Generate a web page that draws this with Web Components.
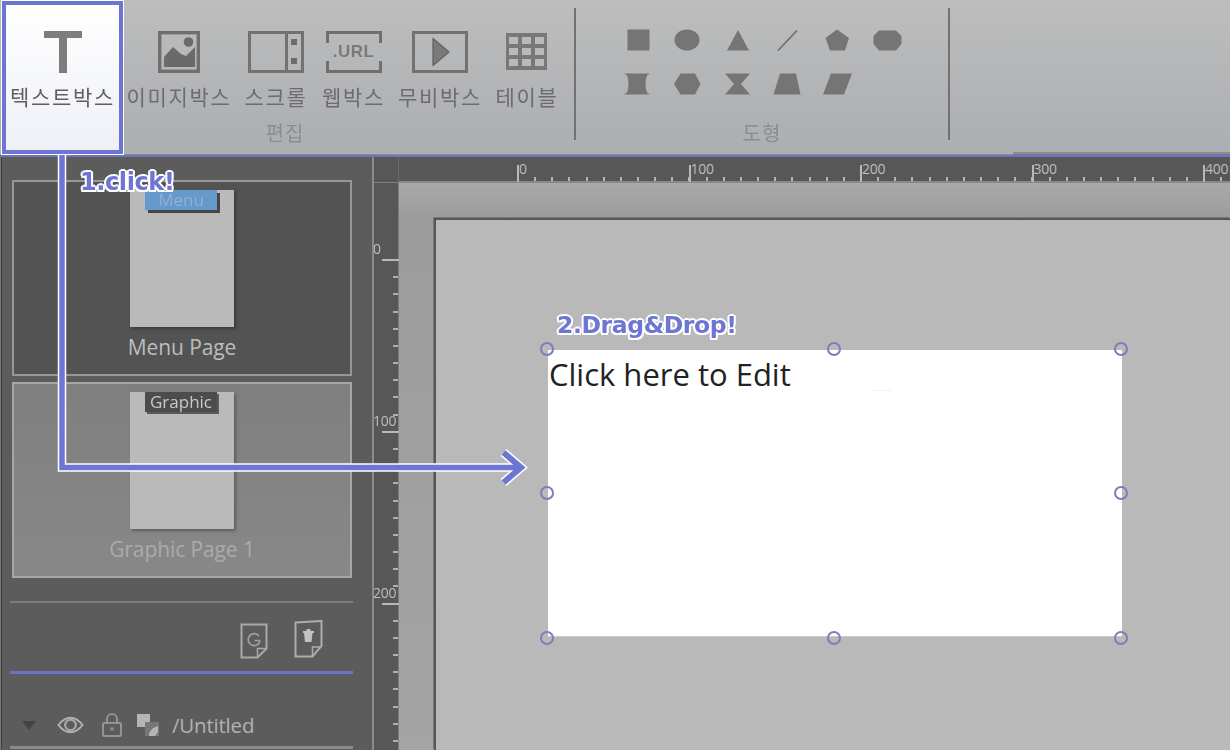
<!DOCTYPE html>
<html lang="ko"><head><meta charset="utf-8"><title>Editor</title>
<style>
html,body{margin:0;padding:0;width:1230px;height:750px;overflow:hidden;background:#5b5b5b}
body{font-family:"Open Sans","Noto Sans CJK KR",sans-serif}
</style></head>
<body>
<app-shell>
  <ribbon-bar slot="ribbon">
    <ribbon-tool selected label="텍스트박스" w="121">
      <svg width="40" height="42" viewBox="0 0 40 42"><path d="M1 0h38v7H24v35h-8V7H1z" fill="#7d7d7d"/></svg>
    </ribbon-tool>
    <ribbon-tool label="이미지박스" w="104" gap="14" ml="3">
      <svg width="42" height="42" viewBox="0 0 42 42"><rect x="1.700" y="1.700" width="38.600" height="38.600" fill="none" stroke="#6f6f6f" stroke-width="3.400"/><path d="M6 36V26l9-10 8 7 5 2 9-9v20z" fill="#6a6a6a"/><circle cx="30.500" cy="11" r="4.800" fill="#6a6a6a"/></svg>
    </ribbon-tool>
    <ribbon-tool label="스크롤" w="62" gap="14">
      <svg width="56" height="42" viewBox="0 0 56 42"><rect x="1.500" y="1.500" width="53" height="39" fill="none" stroke="#727272" stroke-width="3"/><path d="M38.500 2v38" stroke="#727272" stroke-width="3"/><rect x="43" y="8" width="6" height="6" fill="#6c6c6c"/><rect x="43" y="27" width="6" height="6" fill="#6c6c6c"/></svg>
    </ribbon-tool>
    <ribbon-tool label="웹박스" w="63" gap="15">
      <url-icon></url-icon>
    </ribbon-tool>
    <ribbon-tool label="무비박스" w="84" gap="13">
      <svg width="56" height="42" viewBox="0 0 56 42"><rect x="1.500" y="1.500" width="53" height="39" fill="none" stroke="#727272" stroke-width="3"/><path d="M21 7.500L37 21 21 34.500z" fill="#7a7a7a" stroke="#666" stroke-width="1.400" stroke-linejoin="round"/></svg>
    </ribbon-tool>
    <ribbon-tool label="테이블" w="62" gap="14">
      <svg width="42" height="40" viewBox="0 0 42 40"><rect x="0" y="1" width="41" height="37" fill="#787878"/><g fill="#b9babb"><rect x="3" y="5" width="9" height="7"/><rect x="16" y="5" width="9" height="7"/><rect x="29" y="5" width="9" height="7"/><rect x="3" y="16" width="9" height="7"/><rect x="16" y="16" width="9" height="7"/><rect x="29" y="16" width="9" height="7"/><rect x="3" y="27" width="9" height="7"/><rect x="16" y="27" width="9" height="7"/><rect x="29" y="27" width="9" height="7"/></g></svg>
    </ribbon-tool>
    <span slot="edit-label">편집</span>
    <shape-palette slot="shapes"></shape-palette>
    <span slot="shape-label">도형</span>
  </ribbon-bar>
  <page-panel slot="panel">
    <page-thumb tag="Menu" label="Menu Page" kind="menu"></page-thumb>
    <page-thumb tag="Graphic" label="Graphic Page 1" kind="graphic"></page-thumb>
  </page-panel>
  <h-ruler slot="hruler"></h-ruler>
  <v-ruler slot="vruler"></v-ruler>
  <work-canvas slot="canvas"><text-box-item>Click here to Edit</text-box-item></work-canvas>
  <guide-overlay slot="overlay"></guide-overlay>
</app-shell>

<template id="t-shell">
<style>
:host{display:block;width:1230px;height:750px;position:relative;overflow:hidden;background:#5b5b5b}
.app{display:grid;grid-template-rows:157px 1fr;grid-template-columns:372px 27px 1fr;width:1230px;height:750px;filter:blur(.5px)}
.top{grid-column:1/4}
.panel{grid-row:2/4;grid-column:1}
.inner{grid-column:2/4;display:grid;grid-template-columns:27px 1fr;grid-template-rows:26px 1fr;min-height:0}
.corner{background:#575757;border-left:2px solid #8b8b8b;border-bottom:1px solid #7f7f7f;box-sizing:border-box;border-right:1px solid #6a6a6a}
</style>
<div class="app">
  <div class="top"><slot name="ribbon"></slot></div>
  <div class="panel"><slot name="panel"></slot></div>
  <div class="inner">
    <div class="corner"></div>
    <slot name="hruler"></slot>
    <slot name="vruler"></slot>
    <slot name="canvas"></slot>
  </div>
</div>
<slot name="overlay"></slot>
</template>

<template id="t-ribbon">
<style>
:host{display:block;height:157px;box-sizing:border-box;position:relative;background:linear-gradient(#bdbdbd,#acafb3 92%);border-bottom:2px solid #6e74b8;font-family:"Noto Sans CJK KR","Noto Sans",sans-serif}
.bar{display:flex;height:155px;box-shadow:inset 0 -1px 0 #8d8d8d}
.edit{width:574px;display:flex;flex-direction:column;position:relative;flex:none}
.tools{display:flex;align-items:flex-start;height:122px}
.cap{font-size:20px;line-height:24px;color:#8c8c8c;text-align:center;letter-spacing:1px;margin-top:-1px}
.edit .cap{padding-right:4px}
.sep{width:2px;height:132px;background:#727272;margin-top:8px;flex:none}
.shapes{width:372px;flex:none;display:flex;flex-direction:column}
.shapes .wrap{height:122px;padding:18px 0 0 37px;box-sizing:border-box}
.tab{position:absolute;right:0;bottom:0;width:217px;height:1px;background:#6e74b8;border-top:2px solid #8d8d8d}
</style>
<div class="bar">
  <div class="edit"><div class="tools"><slot></slot></div><div class="cap"><slot name="edit-label"></slot></div></div>
  <div class="sep"></div>
  <div class="shapes"><div class="wrap"><slot name="shapes"></slot></div><div class="cap"><slot name="shape-label"></slot></div></div>
  <div class="sep"></div>
</div>
<div class="tab"></div>
</template>

<template id="t-tool">
<style>
:host{display:block;flex:none;box-sizing:border-box}
.t{display:flex;flex-direction:column;align-items:center;box-sizing:border-box;padding-top:31px}
.ic{height:42px;display:flex;align-items:center;justify-content:center}
.lb{font-size:21px;line-height:26px;color:#6c6c6c;white-space:nowrap;margin-top:10px;letter-spacing:1.700px}
:host([selected]) .t{width:121px;height:153px;margin:1px 0 1px 2px;border:4px solid #6c76d2;box-shadow:0 0 0 1px #fff;background:linear-gradient(#fff,#eef0f6);padding-top:26px}
:host([selected]) .lb{color:#5f5f5f}
</style>
<div class="t"><div class="ic"><slot></slot></div><div class="lb"></div></div>
</template>

<template id="t-url">
<style>
:host{display:block;width:56px;height:42px;position:relative;font-family:"Liberation Sans",sans-serif}
svg{display:block}
span{position:absolute;left:0;right:0;top:11px;text-align:center;font-size:17px;line-height:20px;font-weight:700;color:#7a7a7a;letter-spacing:.5px}
</style>
<svg width="56" height="42" viewBox="0 0 56 42"><path d="M1.500 12V1.500h53V12M1.500 30v10.500h53V30" fill="none" stroke="#6f6f6f" stroke-width="3"/></svg>
<span>.URL</span>
</template>

<template id="t-shapes">
<style>
:host{display:grid;grid-template-columns:repeat(6,50px);grid-auto-rows:44px;width:300px}
svg{display:block;margin:auto}
div{display:flex}
</style>
<div><svg width="30" height="24" viewBox="0 0 30 24" fill="#757575"><rect x="4.500" y="1.500" width="22" height="21"/></svg></div>
<div><svg width="30" height="24" viewBox="0 0 30 24" fill="#757575"><ellipse cx="14" cy="12" rx="12.500" ry="10.500"/></svg></div>
<div><svg width="30" height="24" viewBox="0 0 30 24" fill="#757575"><path d="M15 2L26 22.500H4z"/></svg></div>
<div><svg width="30" height="24" viewBox="0 0 30 24"><path d="M5 22.500L24 2.500" stroke="#6f6f6f" stroke-width="1.800" fill="none"/></svg></div>
<div><svg width="30" height="24" viewBox="0 0 30 24" fill="#757575"><path d="M14 1.500l12 8.500-4 12.500H7L2.500 10z"/></svg></div>
<div><svg width="30" height="24" viewBox="0 0 30 24" fill="#757575"><path d="M6 2.500h17l5.500 5.500v8l-5.500 6.500H6L.5 16V8z"/></svg></div>
<div><svg width="30" height="24" viewBox="0 0 30 24" fill="#757575"><path d="M1 1.500h26l-3 2c-2 5-2 12 0 17l3 2H1l3-2c2-5 2-12 0-17z"/></svg></div>
<div><svg width="30" height="24" viewBox="0 0 30 24" fill="#757575"><path d="M7.500 1.500H22l5.500 10.500L22 22.500H7.500L1 12z"/></svg></div>
<div><svg width="30" height="24" viewBox="0 0 30 24" fill="#757575"><path d="M2 1.500h25L18 12l9 10.500H2L11 12z"/></svg></div>
<div><svg width="30" height="24" viewBox="0 0 30 24" fill="#757575"><path d="M7 1.500h16l4.500 21h-27z"/></svg></div>
<div><svg width="30" height="24" viewBox="0 0 30 24" fill="#757575"><path d="M8 1.500h21l-8 21H0z"/></svg></div>
</template>

<template id="t-panel">
<style>
:host{display:flex;flex-direction:column;height:593px;box-sizing:border-box;background:#5c5c5c;border-left:1px solid #777;box-shadow:inset 1px 0 0 #3f3f3f;padding:23px 0 0 11px;color:#b0b0b0;overflow:hidden}
.cards{display:flex;flex-direction:column;gap:6px;width:340px}
.hr{height:2px;width:343px;margin:23px 0 0 -2px;background:#7c7c7c}
.acts{display:flex;justify-content:flex-end;align-items:flex-start;gap:26px;height:68px;box-sizing:border-box;padding:17px 29px 0 0;width:341px;margin-left:-1px}
.blue{height:3px;width:343px;margin-left:-2px;background:#6a72c6}
.row{display:flex;align-items:center;height:46px;margin-top:28px;margin-left:10px;font-size:20.500px;color:#b3b3b3}
.row svg{display:block;flex:none}
.name{margin-left:12px;font-family:"Open Sans",sans-serif;letter-spacing:-.2px}
.foot{height:3px;width:343px;margin-left:-2px;margin-top:-2px;background:#8b8b8b}
</style>
<div class="cards"><slot></slot></div>
<div class="hr"></div>
<div class="acts">
  <svg width="28" height="36" viewBox="0 0 28 36" style="margin-top:3px"><path d="M1.500 1.500h25v24l-9 9h-16z" fill="none" stroke="#a9a9a9" stroke-width="2"/><path d="M26 25.500h-8.500v8.500" fill="none" stroke="#a9a9a9" stroke-width="1.500"/><path d="M19 13a6 6 0 1 0 .5 6.500v-2h-5" fill="none" stroke="#a0a0a0" stroke-width="1.600"/></svg>
  <svg width="29" height="38" viewBox="0 0 29 38"><path d="M1.500 2.500l26-1.500v25l-9 10.500h-17z" fill="none" stroke="#adadad" stroke-width="2"/><path d="M27 27h-8.500v9" fill="none" stroke="#adadad" stroke-width="1.500"/><path d="M9 11h11v2h-1.500l-1 9h-6.500l-1-9H9zM12 11l1-2h3l1 2z" fill="#c2c2c2"/></svg>
</div>
<div class="blue"></div>
<div class="row">
  <svg width="14" height="9" viewBox="0 0 14 9" style="margin-right:21px"><path d="M0 0h14L7 9z" fill="#444"/></svg>
  <svg width="27" height="18" viewBox="0 0 28 18" style="margin-right:17px"><path d="M1.500 9C6 3 10 1.500 14 1.500S22 3 26.500 9C22 15 18 16.500 14 16.500S6 15 1.500 9z" fill="none" stroke="#b2b2b2" stroke-width="2"/><circle cx="14" cy="9" r="5.500" fill="none" stroke="#aaa" stroke-width="2.200"/></svg>
  <svg width="22" height="24" viewBox="0 0 22 24" style="margin-right:13px"><rect x="2" y="10" width="18" height="13" rx="1" fill="none" stroke="#939393" stroke-width="2"/><path d="M6 10V6a5 5 0 0 1 10 0v4" fill="none" stroke="#939393" stroke-width="2"/><rect x="9.500" y="14.500" width="3" height="3" fill="#939393"/></svg>
  <svg width="24" height="24" viewBox="0 0 24 24"><rect x="1" y="1" width="13" height="13" fill="#b5b5b5"/><rect x="9" y="9" width="14" height="14" fill="#777"/><path d="M13 20l4-5 5-2v6l-3 4h-6z" fill="#b5b5b5"/></svg>
  <span class="name">/Untitled</span>
</div>
<div class="foot"></div>
</template>

<template id="t-thumb">
<style>
:host{display:flex;flex-direction:column;align-items:center;height:196px;box-sizing:border-box;border:2px solid #979797;background:#535353;font-size:21px;color:#bdbdbd}
:host([kind="graphic"]){background:linear-gradient(#7f7f7f,#888);border-color:#a6a6a6;color:#ababab}
.pg{width:104px;height:137px;margin-top:8px;background:#bababa;box-shadow:2px 2px 3px #3c3c3c;position:relative;flex:none}
:host([kind="graphic"]) .pg{box-shadow:2px 2px 3px #5e5e5e}
.tag{position:absolute;left:15px;top:0;width:72px;height:20px;background:#6598cb;box-shadow:3px 3px 0 #474747;text-align:center;font-size:17px;line-height:20px;color:#8eb0d2}
:host([kind="graphic"]) .tag{background:#4c4c4c;box-shadow:2px 2px 0 #5a5a5a;color:#c9c9c9}
.lb{margin-top:7px;line-height:27px;white-space:nowrap;letter-spacing:-.1px}
</style>
<div class="pg"><div class="tag"></div></div><div class="lb"></div>
</template>

<template id="t-hruler">
<style>
:host{display:block;height:26px;position:relative;background:#575757;overflow:hidden;font-family:"Open Sans",sans-serif}
.minor{position:absolute;left:118px;right:0;bottom:1px;height:5px;background:repeating-linear-gradient(90deg,#b5b5b5 0 2px,transparent 2px 17.150px)}
.base{position:absolute;left:0;right:0;bottom:0;height:2px;background:#8a8a8a}
.m{position:absolute;top:8px;bottom:1px;width:2px;background:#b9b9b9}
.l{position:absolute;top:3px;font-size:14px;line-height:18px;color:#bdbdbd;letter-spacing:-.3px}
</style>
<div class="minor"></div><div class="base"></div>
</template>

<template id="t-vruler">
<style>
:host{display:block;position:relative;background:#575757;border-left:2px solid #8b8b8b;box-sizing:border-box;overflow:hidden;font-family:"Open Sans",sans-serif}
.minor{position:absolute;right:0;top:76px;bottom:0;width:6px;background:repeating-linear-gradient(#b0b0b0 0 2px,transparent 2px 17.180px)}
.edge{position:absolute;right:0;top:0;bottom:0;width:1px;background:#7d7d7d}
.m{position:absolute;right:0;height:2px;width:17px;background:#b9b9b9}
.l{position:absolute;left:-1px;font-size:14px;line-height:18px;color:#bdbdbd;letter-spacing:-.3px}
</style>
<div class="minor"></div><div class="edge"></div>
</template>

<template id="t-canvas">
<style>
:host{display:block;background:linear-gradient(#a9a9a9,#9c9c9c 36px,#a4a4a4);padding:35px 0 0 35px;box-sizing:border-box;height:567px;overflow:hidden}
.page{height:100%;background:#b9b9b9;border-top:2px solid #565656;border-left:2px solid #565656;box-shadow:-1px -1px 0 #777;padding:130px 0 0 112px;box-sizing:border-box}
</style>
<div class="page"><slot></slot></div>
</template>

<template id="t-box">
<style>
:host{display:block;width:574px;height:286px;background:#fff;position:relative;box-shadow:0 1px 0 #c9c9c9;font-family:"Open Sans",sans-serif}
.txt{font-size:31px;line-height:48px;color:#222;padding-left:1px;white-space:nowrap}
i{position:absolute;width:14px;height:14px;box-sizing:border-box;border:2px solid #7a7fb8;border-radius:50%;margin:-7px 0 0 -7px}
.mark{position:absolute;left:324px;top:40px;width:20px;height:1px;background:#f2f2f2}
</style>
<div class="txt"><slot></slot></div>
<div class="mark"></div>
<i style="left:-1px;top:-1px"></i><i style="left:286px;top:-1px"></i><i style="left:573px;top:-1px"></i>
<i style="left:-1px;top:143px"></i><i style="left:573px;top:143px"></i>
<i style="left:-1px;top:288px"></i><i style="left:286px;top:288px"></i><i style="left:573px;top:288px"></i>
</template>

<template id="t-overlay">
<style>
:host{display:block;position:absolute;inset:0;pointer-events:none;filter:blur(.35px)}
svg{position:absolute;left:0;top:0}
b{position:absolute;font-family:"DejaVu Sans",sans-serif;font-weight:700;color:#6d76d3;white-space:nowrap;letter-spacing:-.4px;
text-shadow:2px 0 #fff,-2px 0 #fff,0 2px #fff,0 -2px #fff,1.500px 1.500px #fff,-1.500px 1.500px #fff,1.500px -1.500px #fff,-1.500px -1.500px #fff}
.a{left:80px;top:166px;font-size:24px;line-height:32px}
.b{left:557px;top:309px;font-size:23.500px;line-height:32px}
</style>
<svg width="1230" height="750" viewBox="0 0 1230 750" fill="none">
  <path d="M62 155V467.500H518" stroke="#fff" stroke-width="8.500"/>
  <path d="M503.500 452.500L521 467.500 503.500 482.500" stroke="#fff" stroke-width="9"/>
  <path d="M62 155V467.500H518" stroke="#6d76d3" stroke-width="5.500"/>
  <path d="M503.500 452.500L521 467.500 503.500 482.500" stroke="#6d76d3" stroke-width="6"/>
</svg>
<b class="a">1.click!</b>
<b class="b">2.Drag&amp;Drop!</b>
</template>

<script>
function tpl(id){return document.getElementById(id).content.cloneNode(true)}
function simple(name,id,init){
  customElements.define(name,class extends HTMLElement{
    constructor(){super();this.attachShadow({mode:"open"}).appendChild(tpl(id))}
    connectedCallback(){if(init)init.call(this,this.shadowRoot)}
  });
}
simple("app-shell","t-shell");
simple("ribbon-bar","t-ribbon");
simple("url-icon","t-url");
simple("shape-palette","t-shapes");
simple("page-panel","t-panel");
simple("work-canvas","t-canvas");
simple("text-box-item","t-box");
simple("guide-overlay","t-overlay");
simple("ribbon-tool","t-tool",function(r){
  r.querySelector(".lb").textContent=this.getAttribute("label");
  if(this.hasAttribute("selected")){this.style.width="124px";return}
  this.style.width=this.getAttribute("w")+"px";
  this.style.marginLeft=(+(this.getAttribute("ml")||this.getAttribute("gap")||0))+"px";
});
simple("page-thumb","t-thumb",function(r){
  r.querySelector(".tag").textContent=this.getAttribute("tag");
  r.querySelector(".lb").textContent=this.getAttribute("label");
});
simple("h-ruler","t-hruler",function(r){
  [0,100,200,300,400].forEach((v,i)=>{
    const x=118+i*171.5;
    const m=document.createElement("div");m.className="m";m.style.left=x+"px";r.appendChild(m);
    const l=document.createElement("span");l.className="l";l.style.left=(x+2)+"px";l.textContent=v;r.appendChild(l);
  });
});
simple("v-ruler","t-vruler",function(r){
  [0,100,200].forEach((v,i)=>{
    const y=76+i*172;
    const m=document.createElement("div");m.className="m";m.style.top=y+"px";r.appendChild(m);
    const l=document.createElement("span");l.className="l";l.style.top=(y-19)+"px";l.textContent=v;r.appendChild(l);
  });
});
</script>
</body></html>
